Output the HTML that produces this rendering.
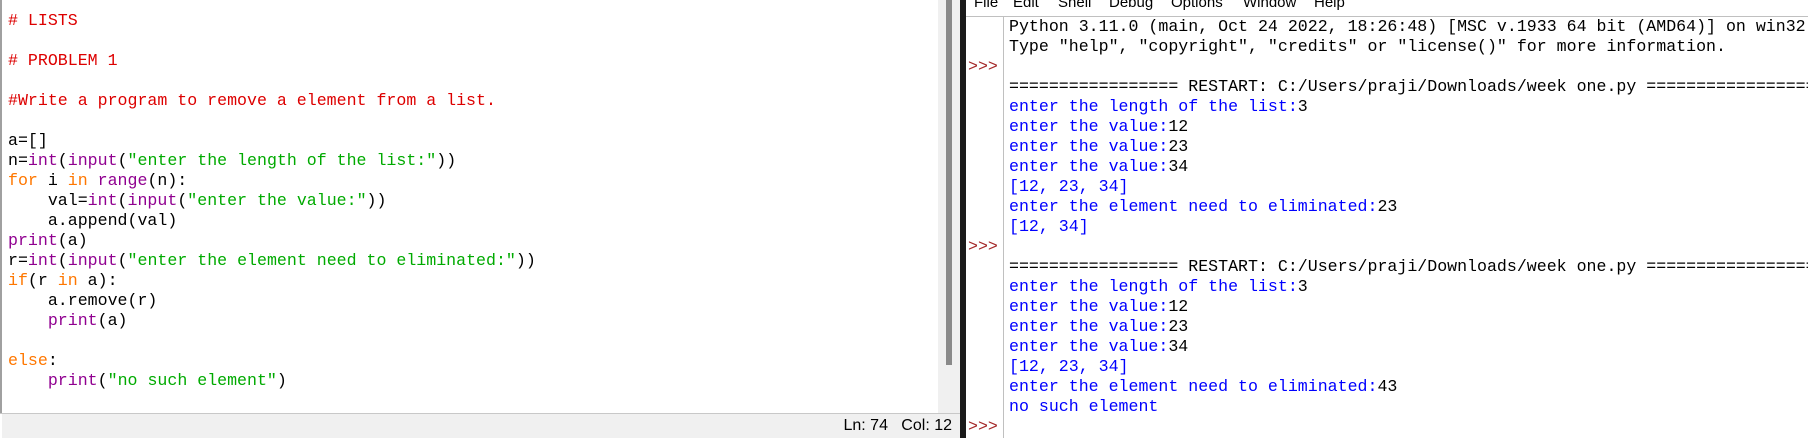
<!DOCTYPE html>
<html><head><meta charset="utf-8"><style>
*{margin:0;padding:0}
body{width:1808px;height:438px;overflow:hidden;background:#fff;position:relative;font-family:"Liberation Mono",monospace}
.m{position:absolute;font-family:"Liberation Mono",monospace;font-size:16.6px;line-height:20px;white-space:pre}
.c{color:#dd0000}.k{color:#ff7700}.b{color:#900090}.s{color:#00aa00}.o{color:#0000ff}.p{color:#a52a2a}
</style></head><body>
<div style="position:absolute;left:0;top:0;width:2px;height:414px;background:#a0a0a0"></div>
<div class="m" style="left:8px;top:11px;width:930px;overflow:hidden"><span class="c"># LISTS</span>

<span class="c"># PROBLEM 1</span>

<span class="c">#Write a program to remove a element from a list.</span>

a=[]
n=<span class="b">int</span>(<span class="b">input</span>(<span class="s">"enter the length of the list:"</span>))
<span class="k">for</span> i <span class="k">in</span> <span class="b">range</span>(n):
    val=<span class="b">int</span>(<span class="b">input</span>(<span class="s">"enter the value:"</span>))
    a.append(val)
<span class="b">print</span>(a)
r=<span class="b">int</span>(<span class="b">input</span>(<span class="s">"enter the element need to eliminated:"</span>))
<span class="k">if</span>(r <span class="k">in</span> a):
    a.remove(r)
    <span class="b">print</span>(a)

<span class="k">else</span>:
    <span class="b">print</span>(<span class="s">"no such element"</span>)</div>
<div style="position:absolute;left:938px;top:0;width:22px;height:414px;background:#f0f0f0"></div>
<div style="position:absolute;left:946px;top:0;width:6px;height:365px;background:#8a8a8a"></div>
<div style="position:absolute;left:0;top:413px;width:960px;height:1px;background:#c8c8c8"></div>
<div style="position:absolute;left:2px;top:414px;width:958px;height:24px;background:#f0f0f0"></div>
<div style="position:absolute;right:856px;top:417px;font:16px 'Liberation Sans',sans-serif;color:#000;white-space:pre">Ln: 74   Col: 12</div>
<div style="position:absolute;left:960px;top:0;width:6px;height:438px;background:#1a1a1a"></div>
<div style="position:absolute;left:966px;top:0;width:842px;height:16px;background:#fff"></div>
<div style="position:absolute;left:966px;top:-6px;font:15px 'Liberation Sans',sans-serif;color:#000;white-space:pre"><span style="position:absolute;left:8px">File</span><span style="position:absolute;left:47px">Edit</span><span style="position:absolute;left:92px">Shell</span><span style="position:absolute;left:143px">Debug</span><span style="position:absolute;left:205px">Options</span><span style="position:absolute;left:277px">Window</span><span style="position:absolute;left:348px">Help</span></div>
<div style="position:absolute;left:966px;top:16px;width:842px;height:1px;background:#c0c0c0"></div>
<div style="position:absolute;left:1003px;top:16px;width:1px;height:422px;background:#c0c0c0"></div>
<div class="m p" style="left:968px;top:57px">&gt;&gt;&gt;</div>
<div class="m p" style="left:968px;top:237px">&gt;&gt;&gt;</div>
<div class="m p" style="left:968px;top:417px">&gt;&gt;&gt;</div>
<div class="m" style="left:1009px;top:17px;width:799px;overflow:hidden">Python 3.11.0 (main, Oct 24 2022, 18:26:48) [MSC v.1933 64 bit (AMD64)] on win32
Type "help", "copyright", "credits" or "license()" for more information.

================= RESTART: C:/Users/praji/Downloads/week one.py =================
<span class="o">enter the length of the list:</span>3
<span class="o">enter the value:</span>12
<span class="o">enter the value:</span>23
<span class="o">enter the value:</span>34
<span class="o">[12, 23, 34]</span>
<span class="o">enter the element need to eliminated:</span>23
<span class="o">[12, 34]</span>

================= RESTART: C:/Users/praji/Downloads/week one.py =================
<span class="o">enter the length of the list:</span>3
<span class="o">enter the value:</span>12
<span class="o">enter the value:</span>23
<span class="o">enter the value:</span>34
<span class="o">[12, 23, 34]</span>
<span class="o">enter the element need to eliminated:</span>43
<span class="o">no such element</span></div>
</body></html>
